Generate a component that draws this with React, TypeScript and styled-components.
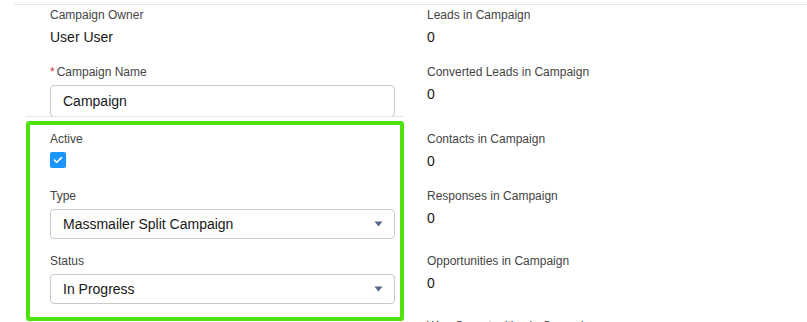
import React from "react";
import styled, { createGlobalStyle } from "styled-components";

const GlobalStyle = createGlobalStyle`
  html, body {
    margin: 0;
    padding: 0;
    background: #ffffff;
    font-family: "Liberation Sans", Arial, sans-serif;
  }
  * { box-sizing: border-box; }
`;

const Page = styled.div`
  position: relative;
  width: 807px;
  height: 322px;
  overflow: hidden;
  padding-top: 4px;
`;

const Section = styled.div`
  margin-left: 14px;
  border-top: 1px solid #e5e5e5;
  padding: 1px 0 0 36px;
`;

const FieldGrid = styled.div`
  display: grid;
  grid-template-columns: 345px 1fr;
  column-gap: 32px;
`;

const Field = styled.div`
  display: flex;
  flex-direction: column;
  padding-bottom: 13px;
`;

const Label = styled.div`
  font-size: 12px;
  line-height: 18px;
  color: #444444;
  display: flex;
  align-items: center;
`;

const Required = styled.abbr`
  color: #c23934;
  text-decoration: none;
  margin-right: 2px;
  font-size: 12px;
`;

const Value = styled.div`
  margin-top: 3px;
  min-height: 23px;
  font-size: 14px;
  line-height: 20px;
  color: #181818;
`;

const TextInput = styled.div`
  margin-top: 4px;
  height: 32px;
  border: 1px solid #c9c9c9;
  border-radius: 4px;
  padding: 0 12px;
  display: flex;
  align-items: center;
  font-size: 14px;
  color: #181818;
`;

const Select = styled.div`
  margin-top: 4px;
  height: 30px;
  border: 1px solid #c9c9c9;
  border-radius: 4px;
  padding: 0 11px 0 12px;
  display: flex;
  align-items: center;
  justify-content: space-between;
  font-size: 14px;
  color: #181818;
`;

const Checkbox = styled.span`
  margin-top: 4px;
  width: 16px;
  height: 16px;
  border-radius: 2px;
  background: #1b96ff;
  display: flex;
  align-items: center;
  justify-content: center;
`;

const Highlight = styled.div`
  position: absolute;
  left: 26px;
  top: 121px;
  width: 378px;
  height: 200px;
  border: 4px solid #4fe30d;
  border-radius: 3px;
  pointer-events: none;
  &::before {
    content: "";
    position: absolute;
    left: -4px;
    right: -4px;
    top: -9px;
    height: 1px;
    background: #e6e6e6;
  }
`;

const Caret = () => (
  <svg width="9" height="6" viewBox="0 0 9 6">
    <path d="M0.5 0.5 H8.5 L4.5 5.5 Z" fill="#54698d" />
  </svg>
);

const Check = () => (
  <svg width="10" height="8" viewBox="0 0 10 8">
    <path d="M1.5 4.2 L3.8 6.3 L8.5 1.6" fill="none" stroke="#ffffff" strokeWidth="1.6" strokeLinecap="round" strokeLinejoin="round" />
  </svg>
);

const ReadOnly: React.FC<{ label: string; value: string }> = ({ label, value }) => (
  <Field>
    <Label>{label}</Label>
    <Value>{value}</Value>
  </Field>
);

export default function App() {
  return (
    <>
      <GlobalStyle />
      <Page>
        <Section>
          <FieldGrid>
            <ReadOnly label="Campaign Owner" value="User User" />
            <ReadOnly label="Leads in Campaign" value="0" />

            <Field>
              <Label>
                <Required title="required">*</Required>Campaign Name
              </Label>
              <TextInput>Campaign</TextInput>
            </Field>
            <ReadOnly label="Converted Leads in Campaign" value="0" />

            <Field>
              <Label>Active</Label>
              <Checkbox>
                <Check />
              </Checkbox>
            </Field>
            <ReadOnly label="Contacts in Campaign" value="0" />

            <Field>
              <Label>Type</Label>
              <Select>
                <span>Massmailer Split Campaign</span>
                <Caret />
              </Select>
            </Field>
            <ReadOnly label="Responses in Campaign" value="0" />

            <Field>
              <Label>Status</Label>
              <Select>
                <span>In Progress</span>
                <Caret />
              </Select>
            </Field>
            <ReadOnly label="Opportunities in Campaign" value="0" />

            <Field />
            <ReadOnly label="Won Opportunities in Campaign" value="0" />
          </FieldGrid>
        </Section>
        <Highlight />
      </Page>
    </>
  );
}
